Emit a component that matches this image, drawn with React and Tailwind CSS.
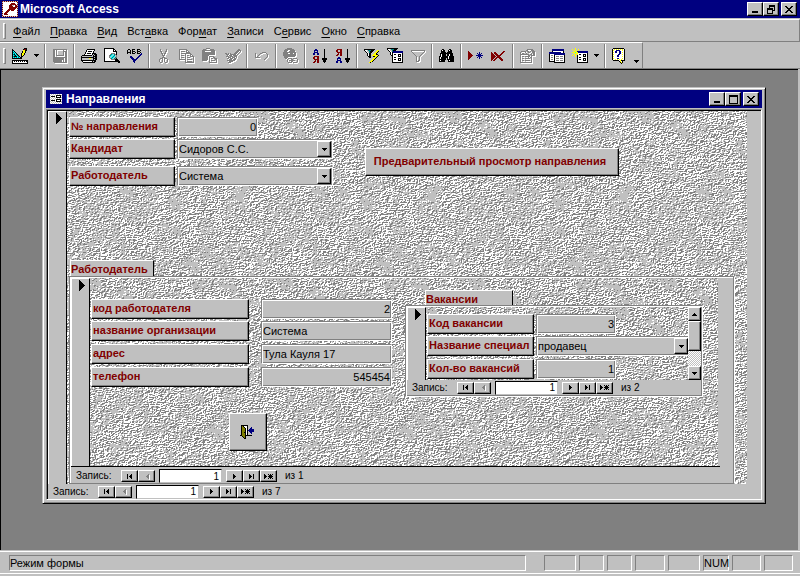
import { useId } from "react";
import clsx from "clsx";

const PALETTE = {
  k: "#000000",
  w: "#ffffff",
  g: "#808080",
  s: "#c0c0c0",
  n: "#000080",
  r: "#800000",
  y: "#ffff00",
  o: "#808000",
  t: "#008080",
  c: "#00ffff",
};

const ICONS = {
  key: [
    "rsrsrsrsrsrsrsrs",
    "swwwwwwwwwwwwwwr",
    "rwwwwwwwwrrrrwws",
    "swwwwwwwrrrrrrwr",
    "rwwwwwwrrrsswrrs",
    "swwwwwwrrrrwwrrr",
    "rwwwwwwrrrrrrrrs",
    "swwwwwwrrrrrrrwr",
    "rwwwwwrrrrrrrwws",
    "swwwwrrrwrrrwwwr",
    "rwwwrrrwwwwwwwws",
    "swwrrrwwwwwwwwwr",
    "rwrrrwwwwwwwwwws",
    "swrrrrwwwwwwwwwr",
    "rwwwwwwwwwwwwwws",
    "srsrsrsrsrsrsrsr",
  ],
  form: [
    "wswswswswsww",
    "swswswkkkkks",
    "wkkkkwkwwwkw",
    "swswswkkkkks",
    "wswswswswsww",
    "swswswkkkkks",
    "wkkkkwkwwwkw",
    "swswswkkkkks",
    "wswswswswsws",
    "swswswswswsw",
  ],
  design: [
    "............kkk.",
    "k..........krrk.",
    "kk.........yykk.",
    "kck.......kyyk..",
    "ktck......kyyk..",
    "kctck....kyyk...",
    "ktkctk...kyyk...",
    "kctkctk..kyk....",
    "ktkkkctk.kk.....",
    "kctctctckk......",
    "kkkkkkkkkk......",
    "................",
    "kkkkkkkkkkkkkkkk",
    "kwkwkwkwkwkwkwkk",
    "kwwwwwwwwwwwwwwk",
    "kkkkkkkkkkkkkkkk",
  ],
  save: [
    "gggggggggggggg",
    "gg.g......g..g",
    "gg.g......gggg",
    "gg.g......g.gg",
    "gg.g......g.gg",
    "gg.g......g.gg",
    "gg.gggggggg.gg",
    "gg..........gg",
    "gggggggggggggg",
    "ggggggggggg.gg",
    "ggggggggggg.gg",
    "ggggggggg.g.gg",
    "ggggggggg.g.gg",
    ".ggggggggggggg",
  ],
  print: [
    "......kkkkkkkk..",
    ".....kwwwwwwwk..",
    ".....kwkkkkwk...",
    "....kwwwwwwwk...",
    "....kwkkkkwkkkk.",
    "...kwwwwwwwkskkk",
    ".kkkkkkkkkkskskk",
    "kssssssssssskkkk",
    "kkkkkkkkkkkkkskk",
    "ksssssssyysskkkk",
    "kssssssssssskskk",
    "kkkkkkkkkkkkkkk.",
    ".kwwwwwwwwwkskk.",
    "..kkkkkkkkkkkk..",
  ],
  preview: [
    "kkkkkkkkkk......",
    "kwwwwwwwwkk.....",
    "kwwwwwwwwkwk....",
    "kwwwwwwwwkkkk...",
    "kwwwwwwwwwwwk...",
    "kwwwwwwggggwk...",
    "kwwwwwgtcstgk...",
    "kwwwwgtcsctsg...",
    "kwwwwgcsctcsg...",
    "kwwwwgsctcstg...",
    "kwwwwwgtcstgk...",
    "kwwwwwwggggkkk..",
    "kwwwwwwwwwwkkkk.",
    "kkkkkkkkkkkkkkkk",
    "..............kk",
  ],
  spelling: [
    ".kk..kkk..kkk..",
    "k..k.k....k..k.",
    "k..k.kkk..kkk..",
    "kkkk.k..k.k..k.",
    "k..k.kkk..kkk.n",
    ".............nn",
    "............nn.",
    "...nn......nn..",
    "...nnn....nn...",
    "....nnn..nn....",
    ".....nnnnn.....",
    "......nnn......",
    "......nn.......",
    ".......n.......",
  ],
  cut: [
    "..g.....g..",
    "..g.....g..",
    "..gg...gg..",
    "...g...g...",
    "...gg.gg...",
    "....g.g....",
    "....ggg....",
    ".....g.....",
    "....ggg....",
    "..ggg.ggg..",
    ".g..g.g..g.",
    ".g..g.g..g.",
    ".g..g.g..g.",
    "..gg...gg..",
  ],
  copy: [
    "gggggggg.......",
    "g......gg......",
    "g.gggg.g.g.....",
    "g......gggg....",
    "g.gggggggggg...",
    "g.....g....gg..",
    "g.ggg.g.gg.g.g.",
    "g.....g....gggg",
    "g.ggg.g.ggg...g",
    "g.....g.......g",
    "ggggggg.ggggg.g",
    "......g.......g",
    "......g.ggggg.g",
    "......ggggggggg",
  ],
  paste: [
    "....gggg.......",
    ".ggg....gggg...",
    "ggggggggggggg..",
    "ggg......gggg..",
    "ggggggggggggg..",
    "ggggggggggggg..",
    "ggggggggggggg..",
    "ggggggg.......",
    "gggggg.ggggg...",
    "gggggg.g...gg..",
    "gggggg.g.gg.ggg",
    "gggggg.g.....gg",
    "ggggg..g.gggg.g",
    ".......g......g",
    ".......gggggggg",
  ],
  brush: [
    ".............gg.",
    "............gggg",
    "...........ggg.g",
    "..........ggg.g.",
    "gg.g.g...ggg.g..",
    ".ggg.gggggg.g...",
    "..g.ggg.gggg....",
    ".ggg.ggg.ggg....",
    "...ggg.ggg.g....",
    "..gg.ggg.gg.....",
    "....ggg.ggg.....",
    "..gggggggg......",
    "....gggg........",
    "...ggg..........",
  ],
  undo: [
    ".......gggg..",
    "g....gg....g.",
    "g...g.......g",
    "g..g........g",
    "g.g.........g",
    "ggggg......g.",
    "..........g..",
    ".........g...",
  ],
  link: [
    "....ggggg.......",
    "..ggggggggg.....",
    ".gggg..ggggg....",
    ".ggg..gggggg....",
    "ggggggggggggg...",
    "ggggg..ggg.gg...",
    "ggggggggggggg...",
    "ggggggggggggg...",
    ".ggggggggggg....",
    ".gggg...........",
    "..gg.gggg.gggg..",
    "....g...gg....g.",
    "....g.gggggg..g.",
    "....g...gg....g.",
    ".....gggg.gggg..",
  ],
  sortAsc: [
    "..nn.......k..",
    ".nnnn......k..",
    ".n..n......k..",
    ".nnnn......k..",
    "nn..nn.....k..",
    "nn..nn.....k..",
    "...........k..",
    ".rrrrr.....k..",
    "rr..rr.....k..",
    "rr..rr...kkkkk",
    ".rrrrr...kkkkk",
    "..r.rr....kkk.",
    ".rr.rr....kkk.",
    "rr..rr.....k..",
  ],
  sortDesc: [
    ".rrrrr.....k..",
    "rr..rr.....k..",
    "rr..rr.....k..",
    ".rrrrr.....k..",
    "..r.rr.....k..",
    ".rr.rr.....k..",
    "rr..rr.....k..",
    "...........k..",
    "..nn.......k..",
    ".nnnn....kkkkk",
    ".n..n....kkkkk",
    ".nnnn.....kkk.",
    "nn..nn....kkk.",
    "nn..nn.....k..",
  ],
  filterFlash: [
    "kkkkkkkkkkk.....",
    "kwwstttkkk...yy.",
    ".kwsstkkk...yyk.",
    "..kwstkk...yyk..",
    "...kwkk...yyk...",
    "...kwkk..yyykk..",
    "...kwkk.yyyyyyk.",
    "....kkk..kkyyk..",
    ".....kk...yyk...",
    ".........yyk....",
    "........yyk.....",
    ".......yyk......",
    "......yyk.......",
    ".....yk.........",
  ],
  filterForm: [
    "kkkkkkkkkkk.....",
    "kwwstttkkk......",
    ".kwsstkkk.......",
    "..kwstnnnnnnnnnn",
    "...kwknnnnnnnnnn",
    "...kwkwwwwwwwwwk",
    "...kwkwkkwwkkkwk",
    "....kkwwwwwkwkwk",
    ".....kwwwwwkkkwk",
    ".....kwkkwwwwwwk",
    ".....kwwwwwkkkwk",
    ".....kwkkwwkwkwk",
    ".....kwwwwwkkkwk",
    ".....kwwwwwwwwwk",
    ".....kkkkkkkkkkk",
  ],
  filter: [
    "gggggggggggggg",
    "g............g",
    ".g..........g.",
    "..g........g..",
    "...g......g...",
    "....g....g....",
    ".....g..g.....",
    ".....g..g.....",
    ".....g..g.....",
    ".....g..g.....",
    ".....g.gg.....",
    ".....ggg......",
  ],
  find: [
    "...kk.....kk...",
    "..kwkk...kwkk..",
    "..kkkk...kkkk..",
    "..kkkkk.kkkkk..",
    ".kkkkkkkkkkkkk.",
    ".kwkkkkskkwkkk.",
    ".kwkkkkskkwkkk.",
    "kkwkkkkkkwkkkkk",
    "kwkkkkkkkwkkkkk",
    "kwkkkkk.kwkkkkk",
    "kkkkkkk.kkkkkkk",
    "kwkkkk...kwkkkk",
    "kkkkkk...kkkkkk",
  ],
  newRecord: [
    "r..............",
    "rr.........n...",
    "rrr......n.n.n.",
    "rrrr......nnn..",
    "rrrrr...nnnnnnn",
    "rrrr......nnn..",
    "rrr......n.n.n.",
    "rr.........n...",
    "r..............",
  ],
  deleteRecord: [
    "............rr.",
    "r..rr......rr..",
    "rr.rrr....rr...",
    "rrr.rrr..rr....",
    "rrrr.rrrrr.....",
    "rrrrr.rrr......",
    "rrrr.rrrrr.....",
    "rrr.rr..rrr....",
    "rr.rr....rrr...",
    "r.rr......rr...",
  ],
  props: [
    ".......gggggg..",
    "......gg...ggg.",
    ".ggggg.gg.g.ggg",
    "g....g..gg..ggg",
    "g.gg..g....g.gg",
    "ggggggggg.gg.gg",
    "g.......gg.gggg",
    "g.gg.ggggg.g...",
    "g.......g.gg...",
    "g.gg.ggggg.g...",
    "g..........g...",
    "g.gg.ggggg.g...",
    "g..........g...",
    "gggggggggggg...",
  ],
  dbWindow: [
    "...nnnnnnnnnnnn.",
    "...nnnnnnnnnnnn.",
    "...kwwwwwwwwwwk.",
    "nnnnnnnnnnnnwwk.",
    "nnnnnnnnnnnnnnnn",
    "kwwwwnnnnnnnnnnn",
    "kwggwkwwwwwwwwwk",
    "kwwwwkwgggwgggwk",
    "kwggwkwwwwwwwwwk",
    "kwwwwkwgggwgggwk",
    "kwggwkwwwwwwwwwk",
    "kwwwwkwgggwgggwk",
    "kkkkkkwwwwwwwwwk",
    ".....kkkkkkkkkkk",
  ],
  newObject: [
    "...y............",
    "y..y..y.........",
    ".y.y.y..........",
    "..yyynnnnnnnnnnn",
    "yyycyynnnnnnnnnn",
    "..yyyywwwwwwwwwk",
    ".y.y.ywkkwwkkkwk",
    "y..y.kwwwwwkwkwk",
    "...y.kwwwwwkkkwk",
    ".....kwkkwwwwwwk",
    ".....kwwwwwkkkwk",
    ".....kwkkwwkwkwk",
    ".....kwwwwwkkkwk",
    ".....kwwwwwwwwwk",
    ".....kkkkkkkkkkk",
  ],
  help: [
    ".kkkkkkkkkkk...",
    "kwywywywywywk..",
    "kywwnnnnwwywk..",
    "kwwnnwwnnwwwk..",
    "kywnnwwnnwywk..",
    "kwwwwwwnnwwwk..",
    "kywwwwnnwwywk..",
    "kwwwwnnwwwwwk..",
    "kywwwnnwwwywk..",
    "kwwwwwwwwwwwk..",
    "kywwwnnwwwywk..",
    "kwwywywywywwk..",
    ".kkkkkkwykkkk..",
    ".......kywk....",
    "........kyk....",
    ".........k.....",
  ],
  door: [
    ".kkkkkkk........",
    ".kokwwwk........",
    ".kookwwk...n....",
    ".koookwk..nn....",
    ".koookwk.nnnnn..",
    ".koookwknnnnnn..",
    ".koookwk.nnnnn..",
    ".kookkwk..nn....",
    ".koookwk...n....",
    ".koookwk........",
    "kkoookkkkkkk....",
    "..kook..........",
    "...kok..........",
    "....kk..........",
  ],
  down: ["kkkkk", ".kkk.", "..k.."],
  up: ["..k..", ".kkk.", "kkkkk"],
  marker: [
    "k.....",
    "kk....",
    "kkk...",
    "kkkk..",
    "kkkkk.",
    "kkkkkk",
    "kkkkk.",
    "kkkk..",
    "kkk...",
    "kk....",
    "k.....",
  ],
  first: ["k...k", "k..kk", "k.kkk", "k..kk", "k...k"],
  prev: ["...g", "..gg", ".ggg", "..gg", "...g"],
  next: ["k..", "kk.", "kkk", "kk.", "k.."],
  last: ["k...k", "kk..k", "kkk.k", "kk..k", "k...k"],
  add: ["k...k.k.k", "kk...kkk.", "kkk.kkkkk", "kk...kkk.", "k...k.k.k"],
  minimize: ["......", "......", "......", "......", "......", "......", "kkkkkk", "kkkkkk"],
  maximize: [
    "kkkkkkkkk",
    "kkkkkkkkk",
    "k.......k",
    "k.......k",
    "k.......k",
    "k.......k",
    "k.......k",
    "k.......k",
    "kkkkkkkkk",
  ],
  restore: [
    "..kkkkkk",
    "..kkkkkk",
    "..k....k",
    "kkkkkk.k",
    "kkkkkk.k",
    "k....kkk",
    "k....k..",
    "k....k..",
    "kkkkkk..",
  ],
  close: [
    "kk....kk",
    ".kk..kk.",
    "..kkkk..",
    "...kk...",
    "..kkkk..",
    ".kk..kk.",
    "kk....kk",
  ],
};

function Pixels({ name, disabled }) {
  const rows = ICONS[name];
  const width = Math.max(...rows.map((r) => r.length));
  const cells = rows.flatMap((row, y) =>
    [...row].map((ch, x) => ({ ch, x, y })).filter((c) => c.ch !== ".")
  );
  return (
    <svg
      width={width}
      height={rows.length}
      className="shrink-0 overflow-visible"
      shapeRendering="crispEdges"
      aria-hidden="true"
    >
      {disabled &&
        cells.map(({ x, y }) => (
          <rect key={`s${x}-${y}`} x={x + 1} y={y + 1} width="1" height="1" fill="#fff" />
        ))}
      {cells.map(({ ch, x, y }) => (
        <rect key={`${x}-${y}`} x={x} y={y} width="1" height="1" fill={PALETTE[ch]} />
      ))}
    </svg>
  );
}

// embossed stone tile: light and dark edges of a random height field
function makeStone(size) {
  let seed = 7;
  const rand = () => {
    seed = (seed + 0x6d2b79f5) | 0;
    let t = Math.imul(seed ^ (seed >>> 15), 1 | seed);
    t = (t + Math.imul(t ^ (t >>> 7), 61 | t)) ^ t;
    return ((t ^ (t >>> 14)) >>> 0) / 4294967296;
  };
  const step = 8;
  const n = size / step;
  const coarse = Array.from({ length: n * n }, rand);
  // share of painted pixels around a point, from blotch to bare
  const density = (x, y) => {
    const cx = Math.floor(x / step);
    const cy = Math.floor(y / step);
    const fx = (x % step) / step;
    const fy = (y % step) / step;
    const at = (i, j) => coarse[(j % n) * n + (i % n)];
    const top = at(cx, cy) * (1 - fx) + at(cx + 1, cy) * fx;
    const bottom = at(cx, cy + 1) * (1 - fx) + at(cx + 1, cy + 1) * fx;
    return top * (1 - fy) + bottom * fy;
  };
  const noise = Array.from({ length: size * size }, rand);
  const at = (x, y) => noise[((y + size) % size) * size + ((x + size) % size)];
  let light = "";
  let dark = "";
  for (let y = 0; y < size; y++) {
    for (let x = 0; x < size; x++) {
      const d = at(x, y) + at(x + 1, y) * 0.4 - at(x - 1, y - 1) - at(x, y - 1) * 0.4;
      const limit = 0.75 - density(x, y) * 1.1;
      if (d > Math.max(limit, 0.05)) light += `M${x} ${y}h1v1h-1z`;
      if (-d > Math.max(limit, 0.2)) dark += `M${x} ${y}h1v1h-1z`;
    }
  }
  const svg = `<svg xmlns="http://www.w3.org/2000/svg" width="${size}" height="${size}" shape-rendering="crispEdges"><path fill="#fff" d="${light}"/><path fill="#808080" d="${dark}"/></svg>`;
  return { backgroundImage: `url("data:image/svg+xml,${encodeURIComponent(svg)}")` };
}

const stone = makeStone(192);

const raised =
  "border border-t-white border-l-white border-r-black border-b-black shadow-[inset_-1px_-1px_0_#808080]";
const etched =
  "border border-t-[#808080] border-l-[#808080] border-r-white border-b-white shadow-[inset_1px_1px_0_#fff,inset_-1px_-1px_0_#808080]";

function WindowButton({ icon, label }) {
  return (
    <button
      aria-label={label}
      className={clsx("flex h-3.5 w-4 items-center justify-center bg-[#c0c0c0]", raised)}
    >
      <Pixels name={icon} />
    </button>
  );
}

function FieldLabel({ htmlFor, children }) {
  return (
    <label
      htmlFor={htmlFor}
      className={clsx(
        "block h-5 overflow-hidden bg-[#c0c0c0] pl-px text-[11px] leading-4 font-bold whitespace-nowrap text-[#800000]",
        raised
      )}
    >
      {children}
    </label>
  );
}

function TextField({ id, value, right, className }) {
  return (
    <input
      id={id}
      defaultValue={value}
      className={clsx(
        "block h-5 rounded-none bg-[#c0c0c0] px-px text-[11px] leading-4 outline-none",
        right && "text-right",
        etched,
        className
      )}
    />
  );
}

function Combo({ id, value, className }) {
  return (
    <div className={clsx("relative h-5", className)}>
      <select
        id={id}
        className={clsx(
          "block h-5 w-full appearance-none rounded-none bg-[#c0c0c0] pl-px text-[11px] leading-4 outline-none",
          etched
        )}
      >
        <option>{value}</option>
      </select>
      <span
        className={clsx(
          "pointer-events-none absolute top-0.5 right-0.5 flex h-4 w-3.5 items-center justify-center bg-[#c0c0c0]",
          raised
        )}
      >
        <Pixels name="down" />
      </span>
    </div>
  );
}

function NavButton({ icon, label, disabled }) {
  return (
    <button
      aria-label={label}
      className={clsx("flex h-3 w-[17px] items-center justify-center bg-[#c0c0c0]", raised)}
    >
      <Pixels name={icon} disabled={disabled} />
    </button>
  );
}

function RecordNav({ total }) {
  const id = useId();
  return (
    <div className="flex h-full items-center pl-[5px] text-[10px] leading-3">
      <label htmlFor={id} className="w-[45px]">
        Запись:
      </label>
      <NavButton icon="first" label="Первая запись" />
      <NavButton icon="prev" label="Предыдущая запись" disabled />
      <input
        id={id}
        defaultValue="1"
        className="mx-1 h-3.5 w-[63px] border border-t-black border-r-[#c0c0c0] border-b-[#c0c0c0] border-l-black bg-white px-0.5 text-right text-[10px] leading-3 outline-none"
      />
      <NavButton icon="next" label="Следующая запись" />
      <NavButton icon="last" label="Последняя запись" />
      <NavButton icon="add" label="Новая запись" />
      <span className="ml-2">из {total}</span>
    </div>
  );
}

function Selector() {
  return (
    <div className="flex w-[19px] shrink-0 justify-center border-t border-r border-l border-t-white border-r-black border-l-white bg-[#c0c0c0] pt-px pl-0.5">
      <Pixels name="marker" />
    </div>
  );
}

function Tab({ className, children }) {
  return (
    <div
      className={clsx(
        "overflow-hidden border-t border-r border-l border-t-white border-r-black border-l-white bg-[#c0c0c0] text-[11px] leading-4 font-bold text-[#800000]",
        className
      )}
    >
      {children}
    </div>
  );
}

function Vacancies() {
  return (
    <section>
      <Tab className="ml-5 h-[15px] w-[88px]">Вакансии</Tab>
      <div className={clsx("w-[298px] bg-[#c0c0c0] p-px", etched)}>
        <div className="flex h-[73px]">
          <Selector />
          <div className="flex-1 overflow-hidden bg-[#c0c0c0] pt-[7px] pl-px" style={stone}>
            <div className="grid grid-cols-[107px_1fr] gap-x-0.5">
              <FieldLabel htmlFor="vac-code">Код вакансии</FieldLabel>
              <TextField id="vac-code" value="3" right className="w-20" />
            </div>
            <div className="mt-0.5 grid grid-cols-[107px_1fr] gap-x-0.5">
              <FieldLabel htmlFor="vac-name">Название специал</FieldLabel>
              <Combo id="vac-name" value="продавец" className="w-[154px]" />
            </div>
            <div className="mt-[3px] grid grid-cols-[107px_1fr] gap-x-0.5">
              <FieldLabel htmlFor="vac-count">Кол-во вакансий</FieldLabel>
              <TextField id="vac-count" value="1" right className="w-20" />
            </div>
          </div>
          <div className="flex w-[13px] flex-col bg-[repeating-conic-gradient(#fff_0_25%,#c0c0c0_0_50%)] bg-size-[2px_2px]">
            <button
              aria-label="Вверх"
              className={clsx("flex h-3.5 items-center justify-center bg-[#c0c0c0]", raised)}
            >
              <Pixels name="up" />
            </button>
            <div className={clsx("h-[30px] bg-[#c0c0c0]", raised)} />
            <button
              aria-label="Вниз"
              className={clsx("mt-auto flex h-3.5 items-center justify-center bg-[#c0c0c0]", raised)}
            >
              <Pixels name="down" />
            </button>
          </div>
        </div>
        <div className="h-[15px]">
          <RecordNav total={2} />
        </div>
      </div>
    </section>
  );
}

const EMPLOYER = [
  { id: "emp-code", label: "код работодателя", value: "2", right: true, gap: "mt-0" },
  { id: "emp-name", label: "название организации", value: "Система", gap: "mt-0.5" },
  { id: "emp-address", label: "адрес", value: "Тула Кауля 17", gap: "mt-[3px]" },
  { id: "emp-phone", label: "телефон", value: "545454", right: true, gap: "mt-[3px]" },
];

function EmployerForm() {
  return (
    <section className="mr-3 ml-0.5">
      <Tab className="ml-px h-4 w-[84px]">Работодатель</Tab>
      <div className="border border-t-[#808080] border-r-white border-b-[#808080] border-l-[#808080] bg-[#c0c0c0] pl-px shadow-[inset_-1px_0_0_#808080,inset_1px_1px_0_#fff]">
        <div className="mr-[14px] border-b border-black pt-px">
          <div className="flex min-h-[188px]">
            <Selector />
            <div className="mr-0.5 flex flex-1 items-start pl-px" style={stone}>
              <div className="pt-[21px]">
                {EMPLOYER.map((f) => (
                  <div key={f.id} className={clsx("grid grid-cols-[158px_131px] gap-x-3", f.gap)}>
                    <FieldLabel htmlFor={f.id}>{f.label}</FieldLabel>
                    <TextField id={f.id} value={f.value} right={f.right} className="w-full" />
                  </div>
                ))}
                <button
                  aria-label="Выход"
                  className={clsx(
                    "mt-[26px] ml-[138px] flex size-[38px] items-center justify-center bg-[#c0c0c0]",
                    raised
                  )}
                >
                  <Pixels name="door" />
                </button>
              </div>
              <div className="ml-[13px] pt-3">
                <Vacancies />
              </div>
            </div>
          </div>
        </div>
        <div className="h-4 pt-0.5">
          <RecordNav total={1} />
        </div>
      </div>
    </section>
  );
}

function ReferralWindow() {
  return (
    <div className="border border-t-[#c0c0c0] border-r-black border-b-black border-l-[#c0c0c0] bg-[#c0c0c0] px-[3px] pt-0.5 pb-[3px] shadow-[inset_1px_1px_0_#fff,inset_-1px_-1px_0_#808080]">
      <header className="flex h-[18px] items-center bg-[#000080] pr-[3px] pl-1 text-white">
        <Pixels name="form" />
        <h1 className="ml-1 flex-1 text-[12px] leading-4 font-bold">Направления</h1>
        <WindowButton icon="minimize" label="Свернуть" />
        <WindowButton icon="maximize" label="Развернуть" />
        <span className="w-0.5" />
        <WindowButton icon="close" label="Закрыть" />
      </header>
      <main className="mt-px border border-t-[#808080] border-r-white border-b-white border-l-[#808080]">
        <div className="border-t border-l border-black">
          <div className="flex">
            <Selector />
            <div className="mr-3.5 flex-1" style={stone}>
              <div className="flex min-h-[149px] items-start pt-1.5 pl-0.5">
                <div>
                  <div className="grid grid-cols-[106px_156px] gap-x-0.5">
                    <FieldLabel htmlFor="ref-number">№ направления</FieldLabel>
                    <TextField id="ref-number" value="0" right className="w-[81px]" />
                  </div>
                  <div className="mt-0.5 grid grid-cols-[106px_156px] gap-x-0.5">
                    <FieldLabel htmlFor="ref-person">Кандидат</FieldLabel>
                    <Combo id="ref-person" value="Сидоров С.С." />
                  </div>
                  <div className="mt-[7px] grid grid-cols-[106px_156px] gap-x-0.5">
                    <FieldLabel htmlFor="ref-employer">Работодатель</FieldLabel>
                    <Combo id="ref-employer" value="Система" />
                  </div>
                </div>
                <button
                  className={clsx(
                    "mt-[31px] ml-8 h-7 w-[254px] bg-[#c0c0c0] pr-1 pb-0.5 text-[11px] leading-4 font-bold whitespace-nowrap text-[#800000]",
                    raised
                  )}
                >
                  Предварительный просмотр направления
                </button>
              </div>
              <EmployerForm />
            </div>
          </div>
          <div className="h-[15px]">
            <RecordNav total={7} />
          </div>
        </div>
      </main>
    </div>
  );
}

const MENU = [
  ["", "Ф", "айл"],
  ["", "П", "равка"],
  ["", "В", "ид"],
  ["Вст", "а", "вка"],
  ["Фор", "м", "ат"],
  ["", "З", "аписи"],
  ["С", "е", "рвис"],
  ["", "О", "кно"],
  ["", "С", "правка"],
];

const TOOLS = [
  [{ icon: "design", label: "Конструктор", arrow: true }],
  [{ icon: "save", label: "Сохранить", disabled: true }],
  [
    { icon: "print", label: "Печать" },
    { icon: "preview", label: "Просмотр" },
    { icon: "spelling", label: "Орфография" },
  ],
  [
    { icon: "cut", label: "Вырезать", disabled: true },
    { icon: "copy", label: "Копировать", disabled: true },
    { icon: "paste", label: "Вставить", disabled: true },
    { icon: "brush", label: "Формат по образцу", disabled: true },
  ],
  [{ icon: "undo", label: "Отменить", disabled: true }],
  [{ icon: "link", label: "Гиперссылка", disabled: true }],
  [
    { icon: "sortAsc", label: "По возрастанию" },
    { icon: "sortDesc", label: "По убыванию" },
  ],
  [
    { icon: "filterFlash", label: "Фильтр по выделенному" },
    { icon: "filterForm", label: "Изменить фильтр" },
    { icon: "filter", label: "Применить фильтр", disabled: true },
  ],
  [{ icon: "find", label: "Найти" }],
  [
    { icon: "newRecord", label: "Новая запись" },
    { icon: "deleteRecord", label: "Удалить запись" },
  ],
  [{ icon: "props", label: "Свойства", disabled: true }],
  [
    { icon: "dbWindow", label: "Окно базы данных" },
    { icon: "newObject", label: "Новый объект", arrow: true },
  ],
  [{ icon: "help", label: "Справка" }],
];

function Grip() {
  return (
    <span className="mr-0.5 h-4 w-[3px] shrink-0 border border-t-white border-r-[#808080] border-b-[#808080] border-l-white" />
  );
}

function Toolbar() {
  return (
    <div className="flex h-[27px] items-stretch border-b border-[#808080]">
      <div className="flex items-center border-t border-r border-t-white border-r-[#808080] pl-[3px]">
        <Grip />
        {TOOLS.map((group, i) => (
          <div key={group[0].icon} className="flex items-center">
            {i > 0 && (
              <span className="mx-0.5 h-6 w-0.5 border-r border-l border-r-white border-l-[#808080]" />
            )}
            {group.map((tool) => (
              <div key={tool.icon} className="flex items-center">
                <button
                  aria-label={tool.label}
                  className="flex h-[22px] w-[23px] items-center justify-center"
                >
                  <Pixels name={tool.icon} disabled={tool.disabled} />
                </button>
                {tool.arrow && (
                  <button
                    aria-label={`${tool.label}: список`}
                    className="flex h-[22px] w-[11px] items-center justify-center"
                  >
                    <Pixels name="down" />
                  </button>
                )}
              </div>
            ))}
          </div>
        ))}
        <button
          aria-label="Другие кнопки"
          className="flex h-[22px] w-[11px] items-end justify-center pb-1"
        >
          <Pixels name="down" />
        </button>
      </div>
    </div>
  );
}

function StatusBar() {
  const cell = "h-4 border border-t-[#808080] border-l-[#808080] border-r-white border-b-white";
  return (
    <footer className="mt-px border-t border-white">
      <div className="flex items-start gap-[3px] border-b border-white pt-[3px] pr-[7px] pb-0.5 pl-[9px] text-[11px] leading-[14px]">
        <div className={clsx("mr-[15px] flex-1", cell)}>Режим формы</div>
        <div className={clsx("w-8", cell)} />
        <div className={clsx("w-[25px]", cell)} />
        <div className={clsx("w-[25px]", cell)} />
        <div className={clsx("w-[30px]", cell)} />
        <div className={clsx("w-8", cell)} />
        <div className={clsx("w-[26px] text-center", cell)}>NUM</div>
        <div className={clsx("w-[29px]", cell)} />
        <div className={clsx("w-[29px]", cell)} />
      </div>
      <div className="h-0.5" />
    </footer>
  );
}

const App = () => {
  return (
    <div className="flex min-h-screen flex-col bg-[#c0c0c0] font-['Liberation_Sans',Arial,sans-serif] text-[11px] text-black">
      <header className="flex h-[18px] items-center bg-[#000080] pr-[3px] pl-0.5 text-white">
        <Pixels name="key" />
        <span className="ml-0.5 flex-1 text-[12px] leading-4 font-bold">Microsoft Access</span>
        <WindowButton icon="minimize" label="Свернуть" />
        <WindowButton icon="restore" label="Восстановить" />
        <span className="w-0.5" />
        <WindowButton icon="close" label="Закрыть" />
      </header>
      <nav className="mt-px flex h-[23px] items-center border-t border-r border-b border-t-white border-r-[#808080] border-b-[#808080] pl-[3px]">
        <Grip />
        <div className="flex gap-2.5 pl-[5px] leading-4">
          {MENU.map(([before, key, after]) => (
            <button key={before + key + after}>
              {before}
              <span className="underline underline-offset-2">{key}</span>
              {after}
            </button>
          ))}
        </div>
      </nav>
      <Toolbar />
      <div className="mr-0.5 flex-1 border-t border-l border-black bg-[#808080] pt-[17px] pr-8 pb-4 pl-[41px]">
        <ReferralWindow />
      </div>
      <StatusBar />
    </div>
  );
};

export default App;
